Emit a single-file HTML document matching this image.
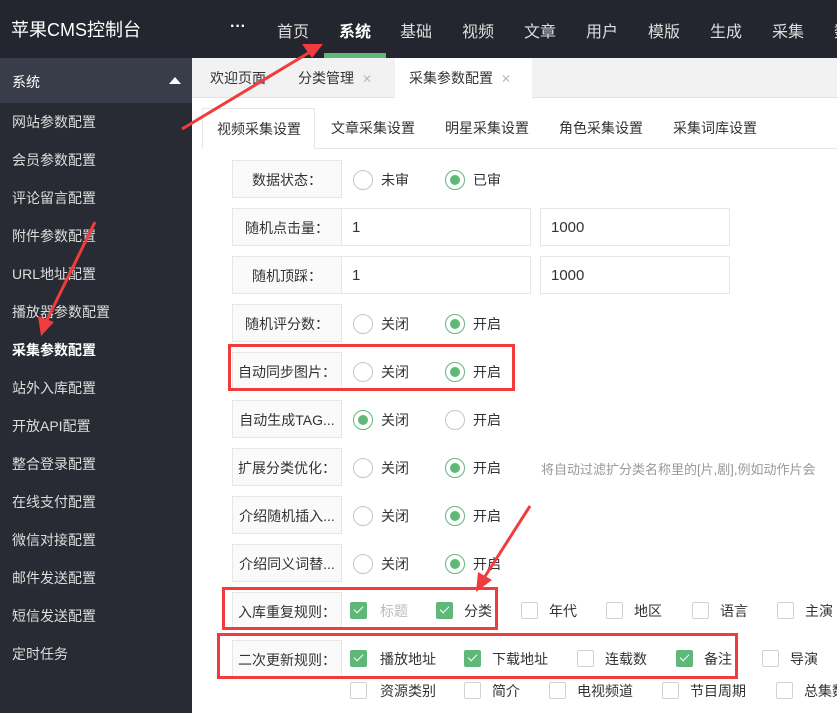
<!DOCTYPE html>
<html><head><meta charset="utf-8"><style>
*{margin:0;padding:0;box-sizing:border-box}
body{width:837px;height:713px;overflow:hidden;background:#fff;font-family:"Liberation Sans","Noto Sans CJK SC",sans-serif;font-size:14px;color:#333;position:relative}
.top{position:absolute;left:0;top:0;width:837px;height:58px;background:#23262e}
.logo{position:absolute;left:11px;top:16px;color:#fff;font-size:18px}
.nav{position:absolute;top:18px;color:#fff;font-size:16px}
.side{position:absolute;left:0;top:58px;width:192px;height:655px;background:#282b33}
.sh{height:45px;background:#393d49;color:#fff;padding:14px 12px;font-size:14px;position:relative}
.sh:after{content:"";position:absolute;right:11px;top:19px;border:6px solid transparent;border-bottom:7px solid #fff;border-top:0}
.si{height:38px;line-height:38px;padding-left:12px;color:#ddd;font-size:14px}
.si.on{color:#fff;font-weight:bold}
.tabs{position:absolute;left:192px;top:58px;width:645px;height:40px;background:#f2f2f2;border-bottom:1px solid #e2e2e2}
.tab{position:absolute;top:0;height:40px;line-height:40px;font-size:14px;color:#333}
.x{color:#bbb;margin-left:8px;font-size:12px}
.sub{position:absolute;left:202px;top:108px;width:635px;height:41px;border-bottom:1px solid #e6e6e6}
.st{position:absolute;top:0;height:41px;line-height:41px;font-size:14px;white-space:nowrap}
.lab{position:absolute;left:232px;width:110px;height:38px;line-height:38px;text-align:center;background:#fafafa;border:1px solid #e6e6e6;font-size:14px;white-space:nowrap}
.inp{position:absolute;height:38px;line-height:38px;border:1px solid #e6e6e6;padding-left:10px;font-size:15px;color:#333}
.r{position:absolute;width:20px;height:20px;border-radius:50%;border:1px solid #c9c4bc;background:#fff}
.r.on{border-color:#5fb878}
.r.on:after{content:"";position:absolute;left:4px;top:4px;width:10px;height:10px;border-radius:50%;background:#5fb878}
.t{position:absolute;font-size:14px;color:#333;white-space:nowrap}
.c{position:absolute;width:17px;height:17px;border:1px solid #d2d2d2;border-radius:2px;background:#fff}
.c.on{background:#5fb878;border-color:#5fb878}
.c.on:after{content:"";position:absolute;left:5px;top:1px;width:4px;height:8px;border:solid #fff;border-width:0 1.5px 1.5px 0;transform:rotate(45deg)}
.red{position:absolute;border:3px solid #f03c3c}
</style></head><body>
<div class="top">
<div class="logo">苹果CMS控制台</div>
<div class="nav" style="left:230px;font-weight:bold">···</div>
<div class="nav" style="left:277px;color:#ddd">首页</div>
<div class="nav" style="left:339px;font-weight:bold">系统</div>
<div style="position:absolute;left:324px;top:53px;width:62px;height:5px;background:#5fb878"></div>
<div class="nav" style="left:400px;color:#ddd">基础</div>
<div class="nav" style="left:462px;color:#ddd">视频</div>
<div class="nav" style="left:524px;color:#ddd">文章</div>
<div class="nav" style="left:586px;color:#ddd">用户</div>
<div class="nav" style="left:648px;color:#ddd">模版</div>
<div class="nav" style="left:710px;color:#ddd">生成</div>
<div class="nav" style="left:772px;color:#ddd">采集</div>
<div class="nav" style="left:834px;color:#ddd">数</div>
</div>
<div class="side">
<div class="sh">系统</div>
<div class="si">网站参数配置</div>
<div class="si">会员参数配置</div>
<div class="si">评论留言配置</div>
<div class="si">附件参数配置</div>
<div class="si">URL地址配置</div>
<div class="si">播放器参数配置</div>
<div class="si on">采集参数配置</div>
<div class="si">站外入库配置</div>
<div class="si">开放API配置</div>
<div class="si">整合登录配置</div>
<div class="si">在线支付配置</div>
<div class="si">微信对接配置</div>
<div class="si">邮件发送配置</div>
<div class="si">短信发送配置</div>
<div class="si">定时任务</div>
</div>
<div class="tabs">
<div class="tab" style="left:18px">欢迎页面</div>
<div class="tab" style="left:106px">分类管理<span class="x">✕</span></div>
<div class="tab" style="left:203px;width:137px;background:#fff;padding-left:14px;height:41px">采集参数配置<span class="x">✕</span></div>
</div>
<div class="sub">
<div class="st" style="left:0;width:113px;border:1px solid #e6e6e6;border-bottom:1px solid #fff;background:#fff;padding-left:14px">视频采集设置</div>
<div class="st" style="left:129px">文章采集设置</div>
<div class="st" style="left:243px">明星采集设置</div>
<div class="st" style="left:357px">角色采集设置</div>
<div class="st" style="left:471px">采集词库设置</div>
</div>

<div class="lab" style="top:160px">数据状态：</div>
<div class="r" style="left:353px;top:170px"></div><div class="t" style="left:381px;top:170px">未审</div>
<div class="r on" style="left:445px;top:170px"></div><div class="t" style="left:473px;top:170px">已审</div>

<div class="lab" style="top:208px">随机点击量：</div>
<div class="inp" style="left:341px;top:208px;width:190px">1</div>
<div class="inp" style="left:540px;top:208px;width:190px">1000</div>
<div class="lab" style="top:256px">随机顶踩：</div>
<div class="inp" style="left:341px;top:256px;width:190px">1</div>
<div class="inp" style="left:540px;top:256px;width:190px">1000</div>

<div class="lab" style="top:304px">随机评分数：</div>
<div class="r" style="left:353px;top:314px"></div><div class="t" style="left:381px;top:314px">关闭</div>
<div class="r on" style="left:445px;top:314px"></div><div class="t" style="left:473px;top:314px">开启</div>

<div class="lab" style="top:352px">自动同步图片：</div>
<div class="r" style="left:353px;top:362px"></div><div class="t" style="left:381px;top:362px">关闭</div>
<div class="r on" style="left:445px;top:362px"></div><div class="t" style="left:473px;top:362px">开启</div>

<div class="lab" style="top:400px">自动生成TAG...</div>
<div class="r on" style="left:353px;top:410px"></div><div class="t" style="left:381px;top:410px">关闭</div>
<div class="r" style="left:445px;top:410px"></div><div class="t" style="left:473px;top:410px">开启</div>

<div class="lab" style="top:448px">扩展分类优化：</div>
<div class="r" style="left:353px;top:458px"></div><div class="t" style="left:381px;top:458px">关闭</div>
<div class="r on" style="left:445px;top:458px"></div><div class="t" style="left:473px;top:458px">开启</div>
<div class="t" style="left:541px;top:459px;color:#999;font-size:13px">将自动过滤扩分类名称里的[片,剧],例如动作片会</div>

<div class="lab" style="top:496px">介绍随机插入...</div>
<div class="r" style="left:353px;top:506px"></div><div class="t" style="left:381px;top:506px">关闭</div>
<div class="r on" style="left:445px;top:506px"></div><div class="t" style="left:473px;top:506px">开启</div>

<div class="lab" style="top:544px">介绍同义词替...</div>
<div class="r" style="left:353px;top:554px"></div><div class="t" style="left:381px;top:554px">关闭</div>
<div class="r on" style="left:445px;top:554px"></div><div class="t" style="left:473px;top:554px">开启</div>

<div class="lab" style="top:592px">入库重复规则：</div>
<div class="c on" style="left:350px;top:602px"></div><div class="t" style="left:380px;top:601px;color:#bbb">标题</div>
<div class="c on" style="left:436px;top:602px"></div><div class="t" style="left:464px;top:601px">分类</div>
<div class="c" style="left:521px;top:602px"></div><div class="t" style="left:549px;top:601px">年代</div>
<div class="c" style="left:606px;top:602px"></div><div class="t" style="left:634px;top:601px">地区</div>
<div class="c" style="left:692px;top:602px"></div><div class="t" style="left:720px;top:601px">语言</div>
<div class="c" style="left:777px;top:602px"></div><div class="t" style="left:805px;top:601px">主演</div>

<div class="lab" style="top:640px">二次更新规则：</div>
<div class="c on" style="left:350px;top:650px"></div><div class="t" style="left:380px;top:649px">播放地址</div>
<div class="c on" style="left:464px;top:650px"></div><div class="t" style="left:492px;top:649px">下载地址</div>
<div class="c" style="left:577px;top:650px"></div><div class="t" style="left:605px;top:649px">连载数</div>
<div class="c on" style="left:676px;top:650px"></div><div class="t" style="left:704px;top:649px">备注</div>
<div class="c" style="left:762px;top:650px"></div><div class="t" style="left:790px;top:649px">导演</div>
<div class="c" style="left:350px;top:682px"></div><div class="t" style="left:380px;top:681px">资源类别</div>
<div class="c" style="left:464px;top:682px"></div><div class="t" style="left:492px;top:681px">简介</div>
<div class="c" style="left:549px;top:682px"></div><div class="t" style="left:577px;top:681px">电视频道</div>
<div class="c" style="left:662px;top:682px"></div><div class="t" style="left:690px;top:681px">节目周期</div>
<div class="c" style="left:776px;top:682px"></div><div class="t" style="left:804px;top:681px">总集数</div>

<div class="red" style="left:228px;top:344px;width:287px;height:47px"></div>
<div class="red" style="left:222px;top:587px;width:276px;height:43px"></div>
<div class="red" style="left:217px;top:633px;width:521px;height:46px"></div>

<svg style="position:absolute;left:0;top:0" width="837" height="713">
<g stroke="#f03c3c" stroke-width="3" fill="#f03c3c">
<line x1="182" y1="129" x2="310" y2="52"/>
<polygon points="323,44 302,44 312,58" stroke="none"/>
<line x1="95" y1="222" x2="46" y2="322"/>
<polygon points="41,336 38,316 54,322" stroke="none"/>
<line x1="530" y1="506" x2="484" y2="578"/>
<polygon points="476,592 478,572 492,580" stroke="none"/>
</g></svg>
</body></html>
